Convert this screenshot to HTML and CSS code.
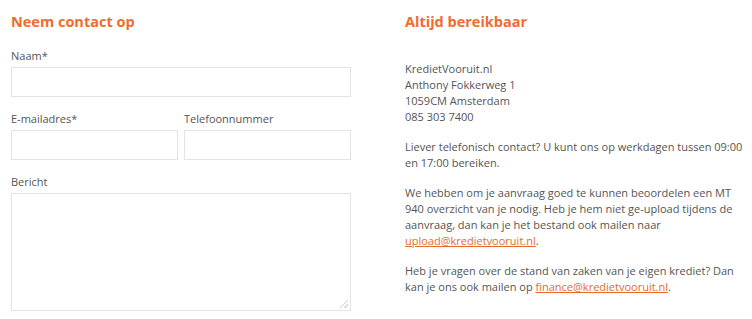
FILE: index.html
```html
<!DOCTYPE html>
<html lang="nl">
<head>
    <meta charset="UTF-8">
    <meta name="viewport" content="width=device-width, initial-scale=1.0">
    <title>Contact</title>
    <link rel="stylesheet" href="styles.css">
</head>
<body>
    <div class="page">
        <section class="form-col">
            <h2>Neem contact op</h2>
            <form class="contact-form">
                <div class="field">
                    <label for="naam">Naam*</label>
                    <input type="text" id="naam">
                </div>
                <div class="row">
                    <div class="field">
                        <label for="email">E-mailadres*</label>
                        <input type="email" id="email">
                    </div>
                    <div class="field">
                        <label for="tel">Telefoonnummer</label>
                        <input type="tel" id="tel">
                    </div>
                </div>
                <div class="field">
                    <label for="bericht">Bericht</label>
                    <textarea id="bericht"></textarea>
                </div>
            </form>
        </section>

        <section class="info-col">
            <h2>Altijd bereikbaar</h2>
            <p class="address">
                KredietVooruit.nl<br>
                Anthony Fokkerweg 1<br>
                1059CM Amsterdam<br>
                085 303 7400
            </p>
            <p>Liever telefonisch contact? U kunt ons op werkdagen tussen 09:00 en 17:00 bereiken.</p>
            <p>We hebben om je aanvraag goed te kunnen beoordelen een MT 940 overzicht van je nodig. Heb je hem niet ge-upload tijdens de aanvraag, dan kan je het bestand ook mailen naar <a href="#">upload@kredietvooruit.nl</a>.</p>
            <p>Heb je vragen over de stand van zaken van je eigen krediet? Dan kan je ons ook mailen op <a href="#">finance@kredietvooruit.nl</a>.</p>
        </section>
    </div>
</body>
</html>
```

FILE: styles.css
```css
body {
    margin: 0;
    font-family: "Open Sans", Arial, sans-serif;
    font-size: 11px;
    color: #555;
    background: #fff;
}
.page {
    display: flex;
    gap: 54px;
    padding: 12px 7px 0 11px;
}
.form-col {
    width: 340px;
    flex-shrink: 0;
}
.info-col {
    width: 340px;
}
h2 {
    margin: 0;
    font-size: 14.5px;
    line-height: 20px;
    font-weight: 700;
    color: #f26b2c;
}
.contact-form {
    margin-top: 16px;
}
.field {
    display: flex;
    flex-direction: column;
    margin-bottom: 14px;
}
.field label {
    line-height: 16px;
    margin-bottom: 3px;
}
.row {
    display: flex;
    gap: 6px;
}
.row .field {
    flex: 1;
}
input,
textarea {
    box-sizing: border-box;
    width: 100%;
    height: 30px;
    border: 1px solid #e3e3e3;
    background: #fff;
    font-family: inherit;
    margin: 0;
}
textarea {
    height: 118px;
    resize: none;
    /* faint resize grip like the original */
    background: #fff linear-gradient(135deg, transparent 48%, #d4d4d4 48%, #d4d4d4 56%, transparent 56%, transparent 74%, #d4d4d4 74%, #d4d4d4 82%, transparent 82%) no-repeat right 2px bottom 2px / 8px 8px;
}
.info-col p {
    margin: 0 0 14px;
    line-height: 16px;
}
.info-col .address {
    margin-top: 29px;
}
.info-col a {
    color: #e8692c;
}
```
